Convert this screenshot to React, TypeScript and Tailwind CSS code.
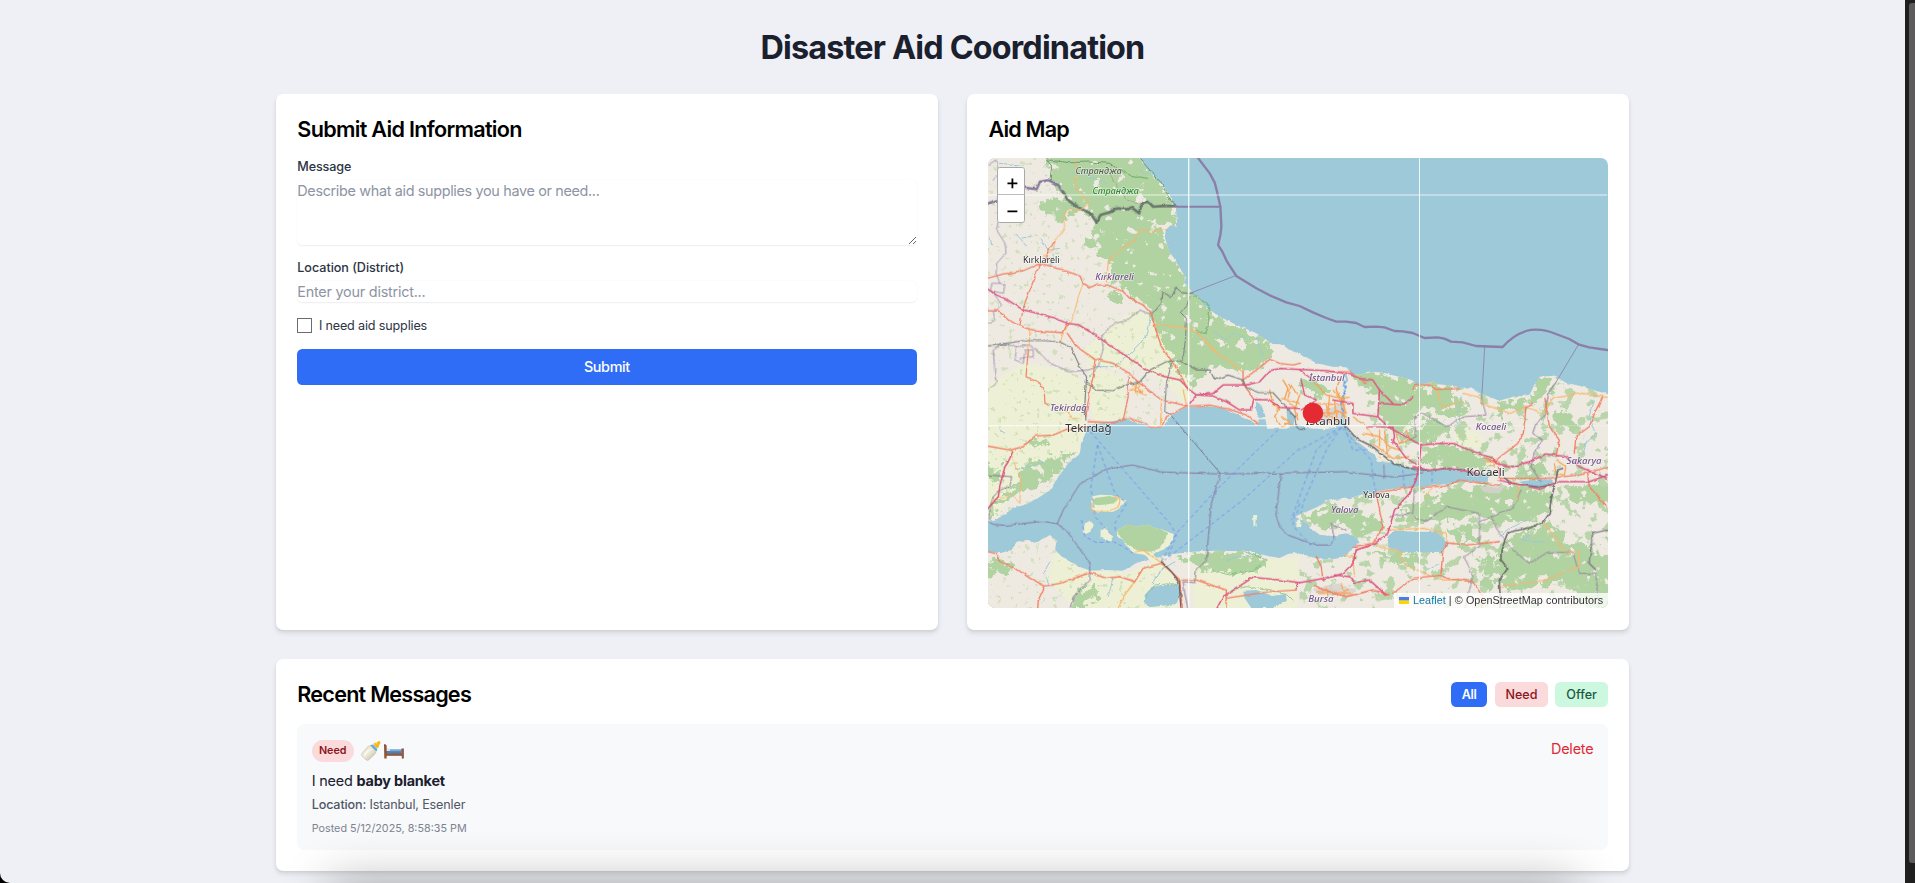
import React, { useState } from "react";

const SEA = "#9dc9d9";
const LAND = "#eeeae2";
const FARM = "#edf0d4";
const WOOD = "#b1d2a1";
const TRUNK = "#f37d61";
const MINOR = "#f9b76c";
const MOTORWAY = "#dd5480";
const BORDER = "#8a749f";
const RAIL = "#5f5f5f";

type Stroke = { d: string; c: string; w: number; o?: number };

const northLand =
  "M0,0 L470,0 478,24 490,42 505,60 522,76 535,93 548,103 560,125 572,140 580,160 588,170 590,195 592,230 572,226 558,240 555,262 562,285 568,305 583,325 595,345 608,362 617,378 612,395 625,412 640,430 670,460 700,490 760,520 830,550 862,572 880,582 905,583 930,600 960,612 985,625 1010,640 1060,650 1100,652 1112,665 1112,674 1150,672 1180,665 1215,669 1240,676 1290,688 1312,703 1345,700 1362,694 1375,703 1410,706 1440,714 1475,712 1500,728 1560,752 1600,740 1650,735 1658,720 1672,690 1682,680 1725,677 1760,698 1800,707 1884,732 L1920,740 1920,1400 0,1400 0,1205 24,1205 60,1210 95,1200 110,1175 140,1170 165,1178 185,1170 210,1155 230,1172 225,1200 250,1225 290,1245 330,1262 380,1260 430,1262 460,1245 500,1228 540,1222 580,1212 640,1205 700,1202 800,1204 850,1215 900,1224 925,1212 950,1208 985,1218 1020,1228 1060,1228 1100,1220 1125,1188 1140,1178 1128,1160 1100,1150 1060,1158 1025,1155 1000,1142 985,1122 962,1108 945,1100 960,1094 1015,1070 1040,1052 1110,1045 1150,1033 1200,1023 1250,1014 1310,1012 1330,1010 1400,1002 1470,992 1520,1000 1530,976 1470,968 1440,960 1395,954 1360,962 1310,960 1275,948 1240,938 1195,935 1185,912 1160,895 1130,872 1105,840 1094,820 1085,800 1070,830 1040,838 985,835 960,828 945,825 920,836 862,836 858,808 838,808 835,825 790,800 730,775 675,767 620,772 580,792 560,815 550,830 520,835 495,826 440,808 400,814 350,822 325,825 315,855 303,880 300,912 265,940 235,980 215,1018 150,1060 100,1075 60,1102 24,1115 0,1115 Z";

const farms = [
  "M470,480 L520,500 560,560 610,620 640,720 610,760 560,700 470,650 400,660 330,640 310,600 360,560 400,520Z",
  "M24,700 L140,640 250,660 320,700 318,830 300,905 210,930 120,980 60,1090 24,1100Z",
  "M320,640 L430,680 440,800 340,820Z",
  "M200,1280 L230,1200 300,1260 440,1270 540,1230 600,1290 590,1400 300,1400Z",
  "M640,1250 L960,1220 950,1400 640,1400Z",
  "M1430,830 L1500,850 1515,890 1450,895 1425,860Z",
  "M1440,1020 L1495,1028 1480,1050 1440,1045Z",
];

const woods = [
  "M200,0 L480,0 505,60 548,103 580,160 592,200 588,215 500,222 545,240 555,262 562,300 608,362 612,395 640,430 700,490 760,520 800,540 850,560 880,600 850,650 805,670 770,665 700,640 670,680 640,700 610,690 580,650 560,600 545,560 520,500 480,455 440,418 380,395 400,350 350,305 310,290 330,250 348,215 300,185 250,205 190,195 190,150 245,140 210,90Z",
  "M385,420 L420,430 430,470 410,470Z",
  "M320,280 L360,285 355,300 320,295Z",
  "M0,940 L60,945 65,1000 24,985Z",
  "M120,960 L150,935 240,915 290,900 270,930 235,970 180,1000 130,1020 60,1060 50,1095 28,1108 50,1050 110,1010Z",
  "M120,880 L200,862 205,885 150,890Z",
  "M0,1240 L60,1225 95,1240 80,1270 24,1285Z",
  "M270,1340 L340,1290 360,1330 320,1374 265,1374Z",
  "M640,1208 L800,1204 860,1230 850,1260 760,1270 690,1270 640,1240 580,1225Z",
  "M1120,668 L1180,668 1290,690 1330,705 1410,712 1470,790 1420,800 1330,770 1290,820 1240,850 1205,800 1200,740 1130,700Z",
  "M1550,750 L1600,758 1650,735 1680,690 1720,680 1715,730 1660,760 1600,790 1545,800Z",
  "M1340,900 L1430,880 1480,910 1540,930 1500,960 1420,955 1370,950 1325,930Z",
  "M1230,850 L1320,840 1340,800 1400,820 1400,860 1330,880Z",
  "M1310,1060 L1370,1030 1470,1010 1600,1010 1720,1025 1715,1080 1650,1110 1560,1120 1500,1090 1400,1110 1320,1115 1240,1120 1240,1100Z",
  "M965,1098 L1050,1065 1150,1080 1200,1100 1215,1150 1130,1150 1085,1120 1045,1140 985,1115Z",
  "M1560,1190 L1610,1150 1700,1120 1740,1130 1760,1180 1920,1210 1920,1400 1800,1365 1760,1290 1600,1330 1555,1280Z",
  "M1620,950 L1690,930 1710,970 1660,985 1610,980Z",
  "M1400,1130 L1470,1130 1500,1180 1440,1185Z",
  "M1490,1230 L1550,1215 1560,1300 1520,1320Z",
  "M1180,1210 L1300,1200 1330,1240 1260,1250Z",
  "M1760,1015 L1920,1000 1920,1060 1780,1060Z",
  "M960,690 L1010,690 1060,730 1030,745 970,720Z",
  "M1720,780 L1780,790 1800,850 1740,830Z",
];

const islands = [
  { land: "M333,1040 L360,1034 395,1036 440,1050 420,1075 400,1085 350,1088 335,1075Z", wood: "M340,1045 L390,1038 415,1046 405,1060 355,1066 338,1062Z" },
  { land: "M315,1120 L332,1112 342,1125 332,1145 318,1152 311,1140Z", wood: "" },
  { land: "M362,1140 L380,1132 385,1145 400,1160 390,1172 362,1163Z", wood: "" },
  { land: "M410,1140 L440,1125 500,1126 540,1138 582,1152 578,1175 560,1195 520,1212 552,1240 535,1250 495,1215 460,1208 430,1175 414,1160Z", wood: "M410,1140 L440,1125 500,1126 540,1138 562,1148 556,1172 540,1195 515,1205 480,1203 430,1175Z" },
  { land: "M820,1096 L833,1095 830,1118 831,1130 822,1131Z", wood: "" },
  { land: "M952,1112 L962,1105 962,1130 950,1128Z", wood: "" },
];

const lakes = [
  "M1223,1160 L1245,1142 1310,1145 1370,1146 1385,1160 1405,1178 1390,1205 1340,1207 1265,1205 1228,1190Z",
  "M1620,995 L1660,990 1715,988 1722,1000 1685,1010 1640,1010Z",
  "M495,1335 L515,1312 545,1305 595,1305 603,1330 590,1362 510,1372 492,1355Z",
  "M790,1322 L830,1320 880,1338 918,1332 922,1352 880,1374 815,1374 795,1345Z",
  "M830,755 L845,765 858,800 838,805 828,775Z",
  "M920,775 L945,795 942,825 925,830Z",
];

const rivers = [
  "M30,260 L35,285 M105,250 L125,270 140,290 M125,262 L150,255 M180,265 L205,300 240,295 M215,350 L220,310",
  "M515,500 L500,560 450,610 400,650 350,650 330,680",
  "M700,545 L740,570 760,550 800,565 M830,560 L850,620",
  "M100,960 L150,950 190,935 M60,840 L75,850",
  "M210,1235 L190,1270 210,1310 M590,1235 L540,1260 520,1300 M400,1280 L385,1340 M740,1230 L820,1210",
  "M1450,740 L1430,800 1440,830 M1845,740 L1830,800 1850,850 1820,880 1810,920",
  "M1560,1160 L1600,1130 1640,1110 M1330,1270 L1380,1240 M1660,1150 L1630,1170 1700,1180",
  "M60,40 L120,45 M270,65 L330,80 380,100 M480,60 L520,80",
];

const adminLines: Stroke[] = [
  { d: "M24,45 L48,30 58,70 40,90 M24,165 L54,150 M54,215 L50,240 75,280 78,310 50,340 48,370 60,400 75,405 70,430 45,425 M60,400 L35,400 32,420 48,440 65,465 40,485 45,510 24,520", c: BORDER, w: 3, o: 0.7 },
  { d: "M515,495 L480,480 440,512 405,520 365,555 370,595 355,650 325,660 270,665 210,640 180,610 150,585 110,590 60,580 40,600 45,680 50,700 24,720", c: BORDER, w: 3, o: 0.75 },
  { d: "M110,590 L105,630 130,640 135,600 160,600 160,620 120,625", c: BORDER, w: 3, o: 0.7 },
  { d: "M518,492 L545,460 550,428 575,440 590,412 605,428 640,430", c: "#6f6a80", w: 3 },
  { d: "M630,440 L620,470 602,487 620,505 618,560 610,630 M575,640 L560,700 555,785 570,792 722,970", c: "#6f6a80", w: 3, o: 0.8 },
  { d: "M722,970 L695,1060 680,1230 650,1260 645,1298 610,1295 615,1330 630,1400", c: BORDER, w: 3 },
  { d: "M24,1115 L40,1123 75,1126 190,1114 232,1121 265,1148 330,1240 328,1290 280,1340 265,1400", c: BORDER, w: 3 },
  { d: "M232,1121 L250,1080 300,1002 380,957 458,945 545,966 722,972 960,968 1100,965 1180,975 1240,981 1290,975 1330,968", c: BORDER, w: 3 },
  { d: "M903,972 L889,1095 900,1130 925,1155 960,1168 1010,1185 1050,1185 1065,1170 1055,1120 1100,1140", c: BORDER, w: 3 },
  { d: "M1507,745 L1520,795 1455,800 1400,830 1330,790 1305,800 1310,860 1280,875", c: BORDER, w: 2.5 },
  { d: "M1728,700 L1710,725 1700,770 1695,800 1670,820 1660,850 1690,870 1665,910 1655,950 1685,995", c: BORDER, w: 3 },
  { d: "M1213,945 L1215,985 M1305,1020 L1300,1090 1230,1100 M1305,1100 L1340,1115 1400,1070 1500,1090 1500,1190 1455,1220 1480,1280 1450,1400 M1500,1115 L1600,1075 1625,1020 M1535,1100 L1560,1150 1600,1200 1650,1240 1700,1210 1780,1205 1800,1270 1850,1270 1860,1400", c: BORDER, w: 3, o: 0.8 },
  { d: "M1884,1140 L1840,1150 1830,1240 1850,1260", c: "#6f5f80", w: 4, o: 0.8 },
  { d: "M24,975 L95,980 90,1010 60,1020 40,1040 30,1070 28,1110", c: "#6f6a80", w: 3, o: 0.8 },
];

const maritime: Stroke[] = [
  { d: "M585,170 L722,170", c: "#8b7ea8", w: 6 },
  { d: "M636,428 L770,376 M1516,590 L1507,745 M1797,585 L1728,700", c: "#8b82ad", w: 3, o: 0.85 },
  { d: "M640,0 L655,24 690,70 705,98 712,125 722,170 725,230 722,255 715,285 728,305 742,335 770,378 830,415 870,436 920,457 960,468 1000,487 1040,504 1070,515 1100,515 1130,519 1155,531 1190,530 1215,532 1245,543 1270,544 1300,549 1335,564 1375,562 1395,566 1415,575 1450,577 1490,588 1570,591 Q1600,556 1640,543 Q1680,532 1730,552 L1770,567 1800,584 1830,592 1884,600 1900,602", c: "#8b7ea8", w: 7 },
];

const landBorder: Stroke[] = [
  { d: "M0,165 L24,160 54,150 M135,113 L170,118 180,95 205,90 235,105 250,130", c: "#84759a", w: 7 },
  { d: "M250,125 L262,148 280,162 310,180 332,190 350,217 362,195 385,188 412,175 440,178 455,172 478,190 486,160 505,155 520,170 550,168 585,168", c: "#69776c", w: 8 },
];

const parkLines: Stroke[] = [
  { d: "M200,26 L215,50 210,90 M205,30 L270,38 330,36 390,40 420,62 M480,26 L510,60 550,105 580,165", c: "#5f8f60", w: 3, o: 0.8 },
  { d: "M420,60 L450,75 500,85 M645,435 L690,475 685,530 678,550 650,545", c: "#6fb26a", w: 4, o: 0.8 },
  { d: "M800,1204 L860,1230 820,1260 750,1275 700,1260", c: "#7bbd78", w: 3, o: 0.8 },
  { d: "M500,1340 L520,1305 600,1300 M750,1325 L800,1310 920,1330 940,1350", c: "#8fbd90", w: 3, o: 0.8 },
  { d: "M330,60 L390,70 410,110 440,150 480,160", c: "#8a8a80", w: 2, o: 0.7 },
];

const minorRoads: Stroke[] = [
  { d: "M285,24 L290,70 285,110 310,140 330,160 300,180 262,180 250,205 255,230 240,255 225,270 220,300 190,320", c: MINOR, w: 3.5, o: 0.85 },
  { d: "M560,238 L510,245 480,238 465,270 440,285 410,310 385,335 380,395", c: MINOR, w: 3.5 },
  { d: "M310,400 L295,440 280,500 250,550 240,580 M150,540 L145,620", c: MINOR, w: 3 },
  { d: "M525,525 L600,530 650,545 680,575 710,610 740,625 760,645 790,665", c: MINOR, w: 4 },
  { d: "M90,900 L110,960 122,985 120,1060 95,1035 35,1050", c: MINOR, w: 3 },
  { d: "M545,750 L542,825 M470,690 L480,710 450,720 500,735 M610,720 L620,765", c: MINOR, w: 3.5 },
  { d: "M255,780 L275,805 300,808 M335,1060 L338,1085 380,1085 418,1070 420,1045 400,1040", c: MINOR, w: 3.5 },
  { d: "M465,1205 L490,1200 545,1238 M465,1295 L430,1340 405,1400", c: MINOR, w: 4 },
  { d: "M1450,730 L1495,740 1520,765 1590,790 1640,770 1690,790 1720,745 1810,730 1884,742", c: MINOR, w: 3.5 },
  { d: "M1360,700 L1380,740 1385,770 1450,755", c: MINOR, w: 3.5 },
  { d: "M1340,1045 L1350,1020 1380,1000 M1600,990 L1620,1015 1610,1050", c: MINOR, w: 3 },
  { d: "M1220,1140 L1330,1135 1400,1150 1405,1180 M1190,1185 L1260,1205 1270,1240 1380,1290 1460,1290", c: MINOR, w: 3.5 },
  { d: "M1125,1280 L1120,1220 1095,1215 M1695,1120 L1740,1180 1755,1205 1800,1208 1800,1250 1700,1290 1560,1310", c: MINOR, w: 3.5 },
  { d: "M910,690 L925,715 915,745 M930,700 L950,730 M870,720 L880,760 900,780 M900,770 L885,800 905,830 930,815 905,800 M915,820 L940,825", c: "#f4a04c", w: 4 },
  { d: "M960,735 L945,780 955,810 M930,760 L950,775 M1000,690 L1040,735 1085,745 1100,790 M1080,690 L1070,720 1090,760", c: "#f4a04c", w: 4 },
];

const trunkRoads: Stroke[] = [
  { d: "M0,390 L24,384 70,372 130,362 182,340 200,345 250,360 300,378 310,400 330,412 350,405 385,405 430,425 450,445 490,465 515,492 525,530 545,590 570,625 600,670 625,720", c: TRUNK, w: 4 },
  { d: "M200,330 L205,295 225,275 M178,345 L150,420 130,470 120,525", c: TRUNK, w: 3.6 },
  { d: "M0,482 L55,483 85,510 125,530 170,543 250,548 262,520 M262,550 L290,590 345,628 400,640 440,665 480,700 545,750 625,768", c: TRUNK, w: 4 },
  { d: "M145,600 L138,680 180,700 193,725 195,760 210,765 M345,630 L340,680 330,720 318,800 M445,680 L445,740 430,810", c: TRUNK, w: 3.6 },
  { d: "M0,884 L90,900 130,890 165,858 220,855 260,838 320,830 M325,815 L400,818 450,805 500,822 515,832 545,830 560,800 620,768 690,765 750,778 800,795 835,820", c: TRUNK, w: 4 },
  { d: "M0,1200 L45,1210 60,1235 100,1250 150,1285 195,1308 240,1300 330,1268 380,1285 420,1280 465,1295 490,1255 545,1240 580,1270 600,1290 650,1290 710,1310 740,1320 738,1400 M195,1308 L175,1350 172,1400 M600,1290 L610,1400", c: TRUNK, w: 4 },
  { d: "M790,690 L830,660 850,645 870,628 900,640 940,645 960,640 M790,665 L790,700 820,745", c: TRUNK, w: 4 },
  { d: "M1300,718 L1310,703 1350,705 1370,718 1440,716 M1160,700 L1110,665 1050,665", c: TRUNK, w: 3.6 },
  { d: "M740,1345 L800,1335 870,1325 950,1320 M1170,1185 L1130,1200 1120,1240", c: TRUNK, w: 3.6 },
  { d: "M1550,930 L1590,900 1615,880 1632,850 1637,800 1640,770 1660,760 M1697,745 L1710,830 1740,870 1730,920 M1870,742 L1850,780 1830,830 1790,860 1785,910", c: TRUNK, w: 4 },
  { d: "M1325,1012 L1400,1008 1440,990 1500,998 1560,1005 M1550,935 L1510,925 M1560,940 L1560,985 1620,985 1700,985 1800,975 1884,952 1900,950 M1825,970 L1830,1010 1884,1070", c: TRUNK, w: 4 },
  { d: "M1190,1030 L1200,1080 1210,1130 1180,1180 1120,1190 M1180,1030 L1300,1010 M1400,1178 L1460,1185 1560,1175 M1405,1180 L1390,1200 1385,1270 M1010,1220 L1025,1250 1030,1290 M1240,1330 L1300,1285 1385,1275 1400,1285 1480,1295 1510,1340 1510,1400", c: TRUNK, w: 4 },
  { d: "M1005,1310 L1100,1340 1180,1320 1230,1335", c: TRUNK, w: 5 },
];

const motorways: Stroke[] = [
  { d: "M0,400 L24,418 50,435 80,448 130,480 180,492 220,503 262,520 295,524 330,545 390,585 450,625 500,660 555,680 600,690 630,720 650,735 700,738 740,755 780,780 815,780 822,748 870,750 900,772 960,775", c: MOTORWAY, w: 4.5 },
  { d: "M0,1085 L24,1075 55,1040 60,1005 75,950 85,935 98,905", c: MOTORWAY, w: 4.5 },
  { d: "M630,760 L650,735 700,730 730,705 800,705 840,695 870,662 900,655 960,658 1040,662 1100,670 1140,685 1180,690 1200,720 1240,760 M1300,740 L1270,765 1200,760", c: MOTORWAY, w: 4.5 },
  { d: "M1200,720 L1195,800 1120,790 1120,760 1060,750 M1165,830 L1240,830 1245,860 1240,880 M1195,800 L1225,830 1260,850 1325,885 1380,880 1420,880 1470,900 1540,925 1550,940 1600,950 1650,935 1700,912 1760,920 1800,950 1884,985", c: MOTORWAY, w: 4.5 },
  { d: "M1325,885 L1318,950 1310,990 1290,1030 1245,1080 1225,1150 1180,1185 1130,1200 1120,1240 1090,1270 1060,1280 960,1298 M1240,870 L1280,925 1310,942", c: MOTORWAY, w: 4.5 },
  { d: "M702,1400 L712,1374 730,1340 820,1282 900,1290 960,1298 M1065,1275 L1110,1280 1125,1298 1170,1290 1220,1335 M950,1298 L950,1318", c: MOTORWAY, w: 4.5 },
  { d: "M1300,950 L1350,960 1400,955 1480,965 1500,975 M1555,990 L1650,1010 1680,1018 1740,995 1830,995 1900,970", c: MOTORWAY, w: 4 },
  { d: "M965,690 L975,735 1010,750 965,780 M1000,690 L960,660", c: MOTORWAY, w: 4 },
];

const rails: Stroke[] = [
  { d: "M0,590 L24,588 80,580 130,572 190,572 240,575 275,595 300,650 320,680 315,760 318,810 M320,695 L350,720 400,722 440,705 480,695 510,660 560,635 600,632 650,660 690,660 705,690 745,675 790,690 800,712 840,728 880,728 920,772 945,800 950,830 960,838 975,838", c: "#6b7070", w: 3.5, o: 0.85 },
  { d: "M1095,825 L1130,865 1180,890 1240,940 1290,955 1345,962 1400,955 1450,960 1490,975 M1575,985 L1600,1000 1680,1012 1728,1000 1735,960 1750,955 M1727,1000 L1715,1050 1710,1090 1690,1120 1650,1133 1585,1148 1565,1200 1565,1230 1585,1255 1560,1290 1562,1335 1562,1400", c: RAIL, w: 5, o: 0.85 },
  { d: "M545,1235 L575,1265 598,1295 605,1400", c: "#6e5c58", w: 4 },
];

const ferries = [
  "M330,845 L345,860 570,1120 590,1155 565,1220",
  "M353,885 L333,1010 345,1100 400,1160",
  "M353,885 L380,960 405,1030 440,1060 405,1120 408,1150",
  "M895,840 L700,1030 590,1150 545,1235",
  "M960,895 L790,1050 640,1165 555,1230",
  "M1085,832 L960,900 M1085,832 L1040,900 970,1060 965,1090 M1085,832 L1010,900 960,1040 935,1110 M1085,832 L1175,930 1180,980 1190,1030",
  "M305,1110 L315,1160 350,1178 400,1175 430,1190 460,1210",
  "M1095,832 L1120,900 1160,900 M1270,960 L1275,1020 M1358,965 L1358,1000 M960,1150 L1000,1190",
  "M945,1095 L940,1125 955,1145 M960,1060 L950,1100",
];

const urban = [
  "M1000,790 L1080,765 1110,810 1085,830 1000,815Z",
  "M1000,1318 L1080,1300 1130,1320 1110,1340 1010,1330Z",
  "M1500,1010 L1580,1005 1560,1030 1520,1030Z",
];

const cityStreets =
  "M985,790 L1010,775 1040,800 1070,780 1100,800 M1050,735 L1045,790 1075,815 M1090,745 L1095,810 M1010,760 L1100,765 M1060,720 L1080,745 1110,742 M1120,800 L1160,830 1180,860 M1150,850 L1200,860 1230,890 1260,900 M1200,840 L1200,890 M1180,880 L1240,925 1290,920 M1215,840 L1225,920 M1250,850 L1260,880 1290,870 1280,840 M1010,1325 L1120,1330 M1040,1310 L1045,1340 M1085,1300 L1095,1340 M1520,935 L1560,935 M1540,925 L1545,950 M1730,930 L1760,950 1755,975 1730,970 1725,940 M470,700 L465,730 490,720 M450,695 L490,730 M1085,1330 L1110,1315 M1040,765 L1050,820 M1065,750 L1070,815 M1020,790 L1100,785 M905,745 L960,760 M935,705 L925,745";

function Lines({ items }: { items: Stroke[] }) {
  return (
    <>
      {items.map((s, i) => (
        <path key={i} d={s.d} stroke={s.c} strokeWidth={s.w} opacity={s.o ?? 1} fill="none" strokeLinejoin="round" strokeLinecap="round" />
      ))}
    </>
  );
}

type Place = { t: string; x: number; y: number; w: number; s: number; kind: "city" | "area" | "park" | "parkDark" };

const places: Place[] = [
  { t: "Странджа", x: 287, y: 72, w: 139, s: 28, kind: "parkDark" },
  { t: "Странджа", x: 338, y: 132, w: 139, s: 28, kind: "park" },
  { t: "Kırklareli", x: 129, y: 340, w: 110, s: 27, kind: "city" },
  { t: "Kırklareli", x: 346, y: 389, w: 116, s: 29, kind: "area" },
  { t: "Tekirdağ", x: 210, y: 783, w: 111, s: 29, kind: "area" },
  { t: "Tekirdağ", x: 256, y: 845, w: 139, s: 34, kind: "city" },
  { t: "İstanbul", x: 988, y: 693, w: 107, s: 29, kind: "area" },
  { t: "İstanbul", x: 978, y: 826, w: 134, s: 34, kind: "city" },
  { t: "Kocaeli", x: 1489, y: 841, w: 92, s: 29, kind: "area" },
  { t: "Kocaeli", x: 1461, y: 977, w: 115, s: 34, kind: "city" },
  { t: "Sakarya", x: 1762, y: 941, w: 105, s: 29, kind: "area" },
  { t: "Yalova", x: 1151, y: 1044, w: 80, s: 26, kind: "city" },
  { t: "Yalova", x: 1054, y: 1088, w: 83, s: 29, kind: "area" },
  { t: "Bursa", x: 986, y: 1356, w: 76, s: 29, kind: "area" },
];

const placeColor = { city: "#2f2f35", area: "#74558a", park: "#2f8a32", parkDark: "#566353" };

function AidMap() {
  return (
    <svg viewBox="24 24 1860 1350" preserveAspectRatio="none" className="block h-full w-full">
      <defs>
        <filter id="coast" x="-2%" y="-2%" width="104%" height="104%">
          <feTurbulence type="fractalNoise" baseFrequency="0.05" numOctaves="3" seed="4" result="n" />
          <feDisplacementMap in="SourceGraphic" in2="n" scale="9" xChannelSelector="R" yChannelSelector="G" />
        </filter>
        <filter id="wood" x="-5%" y="-5%" width="110%" height="110%">
          <feTurbulence type="fractalNoise" baseFrequency="0.035" numOctaves="4" seed="9" result="n" />
          <feDisplacementMap in="SourceGraphic" in2="n" scale="60" xChannelSelector="R" yChannelSelector="G" result="s" />
          <feTurbulence type="fractalNoise" baseFrequency="0.03" numOctaves="5" seed="21" result="m" />
          <feColorMatrix in="m" type="matrix" values="0 0 0 0 0  0 0 0 0 0  0 0 0 0 0  18 0 0 0 -5.2" result="mask" />
          <feComposite in="s" in2="mask" operator="in" />
        </filter>
        <filter id="groves" x="0" y="0" width="100%" height="100%">
          <feTurbulence type="fractalNoise" baseFrequency="0.028" numOctaves="5" seed="33" result="m" />
          <feColorMatrix in="m" type="matrix" values="0 0 0 0 0  0 0 0 0 0  0 0 0 0 0  0 16 0 0 -9.2" result="mask" />
          <feComposite in="SourceGraphic" in2="mask" operator="in" />
        </filter>
        <filter id="copses" x="0" y="0" width="100%" height="100%">
          <feTurbulence type="fractalNoise" baseFrequency="0.06" numOctaves="3" seed="52" result="m" />
          <feColorMatrix in="m" type="matrix" values="0 0 0 0 0  0 0 0 0 0  0 0 0 0 0  0 16 0 0 -10.6" result="mask" />
          <feComposite in="SourceGraphic" in2="mask" operator="in" />
        </filter>
        <filter id="wobble" x="-2%" y="-2%" width="104%" height="104%">
          <feTurbulence type="fractalNoise" baseFrequency="0.04" numOctaves="3" seed="12" result="n" />
          <feDisplacementMap in="SourceGraphic" in2="n" scale="13" xChannelSelector="R" yChannelSelector="G" />
        </filter>
        <clipPath id="landClip">
          <path d={northLand} />
        </clipPath>
      </defs>

      <rect x="0" y="0" width="1920" height="1400" fill={SEA} />
      <path d={northLand} fill={LAND} filter="url(#coast)" />
      <g clipPath="url(#landClip)">
        <g filter="url(#wobble)">
          {farms.map((d, i) => (
            <path key={i} d={d} fill={FARM} />
          ))}
        </g>
        <path d="M1130,680 H1900 V1400 H960 V1040 L1200,1020Z" fill={WOOD} opacity="0.85" filter="url(#groves)" />
        <path d="M10,10 H640 V1400 H10Z" fill="#c6dcae" opacity="0.7" filter="url(#copses)" />
        <g filter="url(#wood)">
          {woods.map((d, i) => (
            <path key={i} d={d} fill={WOOD} />
          ))}
        </g>
        {urban.map((d, i) => (
          <path key={i} d={d} fill="#d8d2cf" opacity="0.8" filter="url(#coast)" />
        ))}
      </g>
      <g filter="url(#coast)">
        {islands.map((k, i) => (
          <g key={i}>
            <path d={k.land} fill={FARM} />
            {k.wood && <path d={k.wood} fill={WOOD} />}
          </g>
        ))}
        {lakes.map((d, i) => (
          <path key={i} d={d} fill={SEA} />
        ))}
        <path d="M1097,672 L1103,690 1092,705 1096,725 1085,760 1090,790 1085,815" stroke={SEA} strokeWidth="6" fill="none" />
      </g>
      <g filter="url(#wobble)">
        {rivers.map((d, i) => (
          <path key={i} d={d} stroke={SEA} strokeWidth="3" fill="none" />
        ))}
        <Lines items={parkLines} />
      </g>
      <Lines items={maritime} />
      <g filter="url(#coast)">
        <Lines items={landBorder} />
        <Lines items={adminLines} />
        <path d="M1093,690 L1098,720 1085,760 1092,800" stroke="#4d86ee" strokeWidth="4" strokeDasharray="10 7" fill="none" />
      </g>
      {ferries.map((d, i) => (
        <path key={i} d={d} stroke="#6f8ff0" strokeWidth="3" strokeDasharray="11 9" fill="none" opacity="0.85" />
      ))}
      <g filter="url(#coast)">
        <Lines items={minorRoads} />
        <path d={cityStreets} stroke="#f6a65a" strokeWidth="4" fill="none" strokeLinejoin="round" />
        <Lines items={trunkRoads} />
        <Lines items={rails} />
        <Lines items={motorways} />
      </g>

      <g stroke="#ffffff" fill="none">
        <path d="M627,24 V1374" strokeWidth="4" opacity="0.85" />
        <path d="M1319.500,24 V1374" strokeWidth="3" opacity="0.85" />
        <path d="M24,135 H1884" strokeWidth="5" opacity="0.5" />
        <path d="M24,826 H1318" strokeWidth="4" opacity="0.95" />
        <path d="M1318,826 H1884" strokeWidth="3" opacity="0.3" />
      </g>

      {places.map((p, i) => (
        <text
          key={i}
          x={p.x}
          y={p.y}
          fontSize={p.s}
          textLength={p.w}
          lengthAdjust="spacingAndGlyphs"
          fill={placeColor[p.kind]}
          stroke="#ffffff"
          strokeOpacity="0.55"
          strokeWidth="4"
          strokeLinejoin="round"
          paintOrder="stroke"
          fontFamily="'Noto Sans', sans-serif"
          fontStyle={p.kind === "city" ? "normal" : "italic"}
          fontWeight={p.kind === "city" ? 400 : 500}
        >
          {p.t}
        </text>
      ))}

      <circle cx="1000" cy="789" r="31" fill="#e42a33" />
    </svg>
  );
}

function MapPanel() {
  return (
    <div className="relative h-[500px] overflow-hidden rounded-lg">
      <AidMap />
      <div className="absolute left-[10px] top-[10px] flex w-[31px] flex-col overflow-hidden rounded-[3px] border border-[#a9aaa8] bg-white text-black">
        <button className="flex h-[30px] items-end justify-center border-b border-[#bbbbbb] pb-[6px] pl-[2px]" aria-label="Zoom in">
          <svg viewBox="0 0 12 12" className="h-3 w-3">
            <path d="M6 .5v11M.5 6h11" stroke="currentColor" strokeWidth="2" />
          </svg>
        </button>
        <button className="flex h-[30px] items-end justify-center pb-[6px] pl-[2px]" aria-label="Zoom out">
          <svg viewBox="0 0 12 12" className="h-3 w-3">
            <path d="M.5 6h11" stroke="currentColor" strokeWidth="2" />
          </svg>
        </button>
      </div>
      <div className="absolute bottom-0 right-0 flex h-[17px] items-center whitespace-nowrap bg-white/80 px-[5px] font-['Liberation_Sans',sans-serif] text-[12px] leading-[17px] tracking-[0.08px] text-[#333333]">
        <svg viewBox="0 0 12 8" className="mr-[4px] h-2 w-3">
          <path fill="#4C7BE1" d="M0 0h12v4H0z" />
          <path fill="#FFD500" d="M0 4h12v4H0z" />
        </svg>
        <span className="text-[#0f78a8]">Leaflet</span>
        <span className="whitespace-pre"> | © OpenStreetMap contributors</span>
      </div>
    </div>
  );
}

function BabyBottle() {
  return (
    <svg viewBox="0 0 60 60" className="h-[22px] w-[22px]" aria-label="baby bottle">
      <defs>
        <linearGradient id="milk" x1="0" y1="0" x2="1" y2="1">
          <stop offset="0" stopColor="#d9d3bf" />
          <stop offset="0.45" stopColor="#f3efdf" />
          <stop offset="1" stopColor="#b9b196" />
        </linearGradient>
      </defs>
      <path d="M28 14 L46 32 Q45 38 40 42 L24 57 Q20 61 15 57 L3 46 Q-1 42 3 37 L18 20 Q22 15 28 14Z" fill="url(#milk)" stroke="#a79f86" strokeWidth="1" />
      <path d="M29 13 Q34 9 38 12 L48 22 Q51 27 47 31 Z" fill="#6fb6e6" />
      <path d="M30 13 L47 30" stroke="#4a93cc" strokeWidth="3" />
      <path d="M37 11 Q39 4 47 5 L54 0 Q60 0 59 6 L55 12 Q56 20 49 22Z" fill="#f7b71d" />
      <path d="M41 11 Q43 7 48 8" stroke="#fde07a" strokeWidth="3" fill="none" />
      <path d="M12 40 L24 27" stroke="#ffffff" strokeWidth="4" strokeLinecap="round" opacity="0.8" />
    </svg>
  );
}

function Bed() {
  return (
    <svg viewBox="0 0 60 60" className="h-[22px] w-[22px]" aria-label="bed">
      <path d="M6 26 H54 V40 H6Z" fill="#4b7fb8" />
      <path d="M18 26 H54 V31 H18Z" fill="#7ba9d8" />
      <path d="M6 23 Q12 20 18 24 V30 H6Z" fill="#d9e6f2" />
      <path d="M4 38 H56 V45 H4Z" fill="#95593d" />
      <path d="M0 10 H4 L8 14 V53 H1Z" fill="#8a4c33" />
      <path d="M53 23 H60 V53 H54Z" fill="#8a4c33" />
      <path d="M3 14 V50 M57 26 V50" stroke="#b0714f" strokeWidth="1.500" />
    </svg>
  );
}

function AidForm() {
  return (
    <form className="space-y-4" onSubmit={(e) => e.preventDefault()}>
      <div>
        <label className="block text-sm font-medium tracking-[-0.15px] text-[#2c3444]">Message</label>
        <textarea
          rows={3}
          placeholder="Describe what aid supplies you have or need..."
          className="mt-1 block h-[72px] w-full rounded-md tracking-[-0.37px] shadow-[0_1px_1.5px_0_rgba(0,0,0,0.07)] placeholder:text-[#8d94a3]"
        />
      </div>
      <div>
        <label className="block text-sm font-medium tracking-[-0.05px] text-[#2c3444]">Location (District)</label>
        <input
          placeholder="Enter your district..."
          className="mt-1 block h-6 w-full rounded-md tracking-[-0.25px] shadow-[0_1px_1.5px_0_rgba(0,0,0,0.07)] placeholder:text-[#8d94a3]"
        />
      </div>
      <div className="flex items-center">
        <span role="checkbox" aria-checked="false" className="h-4 w-4 border border-[#6b6b70] bg-white" />
        <label className="ml-2 block text-sm tracking-[-0.18px] text-[#2c3444]">I need aid supplies</label>
      </div>
      <button className="w-full rounded-md bg-[#2f6df6] px-4 py-2 font-medium tracking-[-0.4px] text-white">Submit</button>
    </form>
  );
}

const filters = [
  { name: "All", cls: "bg-[#2f6df6] text-white font-semibold tracking-[-0.3px]" },
  { name: "Need", cls: "bg-[#fbdadc] text-[#8b1620] font-medium" },
  { name: "Offer", cls: "bg-[#cbf8df] text-[#1c5a40] font-medium" },
];

export default function App() {
  const [, setFilter] = useState("All");
  return (
    <div className="flex h-[883px] w-[1915px] overflow-hidden bg-black font-[Inter,sans-serif]">
      <div className="relative h-full w-[1905px] overflow-hidden rounded-bl-[10px] bg-[#eff0f5]">
        <div className="pt-[33px] [zoom:0.9]">
          <main className="mx-auto w-[1504px]">
            <h1 className="mb-[31px] text-center text-4xl font-bold tracking-[-0.93px] text-[#1a202d]">Disaster Aid Coordination</h1>
            <div className="grid grid-cols-2 gap-8">
              <section className="rounded-lg bg-white p-6 shadow-md">
                <h2 className="mb-4 text-2xl font-semibold tracking-[-0.76px] text-black">Submit Aid Information</h2>
                <AidForm />
              </section>
              <section className="rounded-lg bg-white p-6 shadow-md">
                <h2 className="mb-4 text-2xl font-semibold tracking-[-0.9px] text-black">Aid Map</h2>
                <MapPanel />
              </section>
            </div>
            <section className="mt-8 rounded-lg bg-white p-6 shadow-md">
              <div className="mb-4 flex items-center justify-between">
                <h2 className="text-2xl font-semibold tracking-[-0.84px] text-black">Recent Messages</h2>
                <div className="flex gap-2">
                  {filters.map((f) => (
                    <button key={f.name} onClick={() => setFilter(f.name)} className={`rounded-md px-3 py-1 text-sm ${f.cls}`}>
                      {f.name}
                    </button>
                  ))}
                </div>
              </div>
              <article className="flex h-[140px] items-start justify-between rounded-lg bg-[#f8f9fb] p-4">
                <div>
                  <div className="flex h-7 items-center gap-2">
                    <span className="mt-px rounded-full bg-[#fbdadc] px-2 py-1 text-xs font-semibold text-[#8b1620]">Need</span>
                    <span className="mt-[2px] flex gap-[4px]">
                      <BabyBottle />
                      <Bed />
                    </span>
                  </div>
                  <p className="mt-2 tracking-[-0.2px] text-[#1a202d]">
                    I need <strong className="font-bold">baby blanket</strong>
                  </p>
                  <p className="mt-[5px] text-sm tracking-[-0.16px] text-[#4f5665]">
                    <span className="font-medium">Location:</span> Istanbul, Esenler
                  </p>
                  <p className="mt-2 text-xs text-[#7c8391]">Posted 5/12/2025, 8:58:35 PM</p>
                </div>
                <button className="tracking-[-0.25px] text-[#df2935]">Delete</button>
              </article>
            </section>
          </main>
        </div>
        <div className="pointer-events-none absolute left-[340px] top-[893px] h-10 w-[1225px] shadow-[0_0_50px_10px_rgba(0,0,0,0.32)]" />
      </div>
      <div className="flex w-[10px] flex-col items-end bg-[#1f1f1f] pt-[3px]">
        <div className="h-[860px] w-[6px] rounded-l-[3px] bg-[#5d5b5b]" />
      </div>
    </div>
  );
}
